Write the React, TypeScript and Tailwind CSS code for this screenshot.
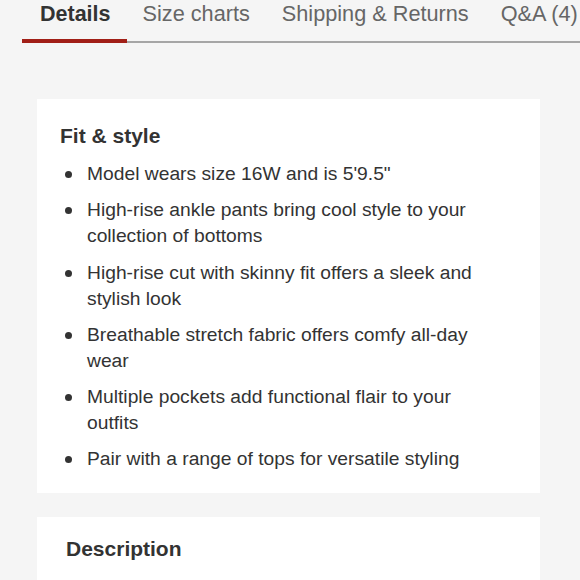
const TABS = ['Size charts', 'Shipping & Returns', 'Q&A (4)'];

const FIT_ITEMS = [
  'Model wears size 16W and is 5\'9.5"',
  'High-rise ankle pants bring cool style to your collection of bottoms',
  'High-rise cut with skinny fit offers a sleek and stylish look',
  'Breathable stretch fabric offers comfy all-day wear',
  'Multiple pockets add functional flair to your outfits',
  'Pair with a range of tops for versatile styling',
];

function Bullet({ text }: { text: string }) {
  return (
    <li className="flex">
      <div className="w-[27px] shrink-0">
        <span className="ml-[5px] mt-[10px] block h-[7px] w-[7px] rounded-full bg-[#333]" aria-hidden="true" />
      </div>
      <span className="flex-1 pr-[40px]">{text}</span>
    </li>
  );
}

export default function App() {
  return (
    <div className="min-h-screen overflow-hidden bg-[#f5f5f5] font-['Liberation_Sans',Arial,sans-serif] text-[#333]">
      {/* Tabs */}
      <nav className="flex h-[43px] whitespace-nowrap leading-[28px]">
        <div className="ml-[22px] border-b-4 border-[#a11f17] pl-[18px] pr-[16px] text-[21.5px] font-bold text-[#333]">
          Details
        </div>
        <div className="flex flex-1 gap-[32px] border-b-2 border-[#a6a6a6] pl-[16px] text-[21.7px] text-[#666]">
          {TABS.map((t) => (
            <span key={t}>{t}</span>
          ))}
        </div>
      </nav>

      {/* Fit & style */}
      <section className="ml-[37px] mr-[40px] mt-[56px] bg-white pb-[21px] pl-[23px] pt-[23px]">
        <h2 className="text-[21px] font-bold leading-[28px]">Fit &amp; style</h2>
        <ul className="mt-[11px] flex flex-col gap-[10.25px] text-[19.25px] leading-[26px]">
          {FIT_ITEMS.map((item) => (
            <Bullet key={item} text={item} />
          ))}
        </ul>
      </section>

      {/* Description */}
      <section className="ml-[37px] mr-[40px] mt-[24px] h-[120px] bg-white pl-[29px] pt-[18px]">
        <h2 className="text-[21px] font-bold leading-[28px]">Description</h2>
      </section>
    </div>
  );
}
